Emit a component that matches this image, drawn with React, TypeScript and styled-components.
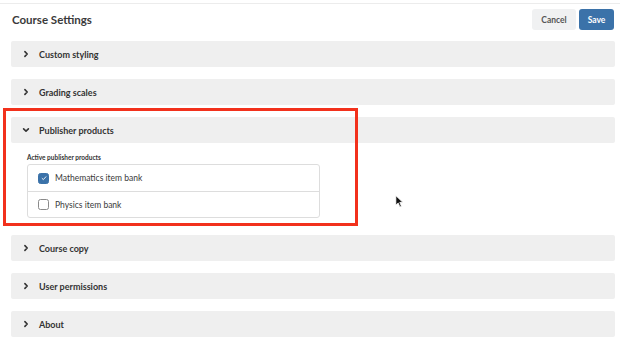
import React from 'react';
import styled, { createGlobalStyle } from 'styled-components';

const GlobalStyle = createGlobalStyle`
    html, body {
        margin: 0;
        padding: 0;
        background: #ffffff;
    }
    body {
        font-family: 'Lato', 'Noto Sans', sans-serif;
        color: #333333;
    }
`;

type Section = { title: string; open?: boolean };

const sections: Section[] = [
    { title: 'Custom styling' },
    { title: 'Grading scales' },
    { title: 'Publisher products', open: true },
    { title: 'Course copy' },
    { title: 'User permissions' },
    { title: 'About' },
];

const products = [
    { name: 'Mathematics item bank', checked: true },
    { name: 'Physics item bank', checked: false },
];

const Chevron = ({ open }: { open?: boolean }) => (
    <ChevronIcon viewBox="0 0 10 10" width="10" height="10">
        {open ? (
            <path d="M2.6 3.9 L5 6.2 L7.4 3.9" />
        ) : (
            <path d="M3.9 2.6 L6.2 5 L3.9 7.4" />
        )}
    </ChevronIcon>
);

const Check = ({ checked }: { checked: boolean }) => (
    <CheckBox $checked={checked}>
        {checked && (
            <svg viewBox="0 0 10 10" width="8" height="8">
                <path d="M2.3 5.2 L4.2 7 L7.7 3.1" fill="none" stroke="#fff" strokeWidth="1.1" />
            </svg>
        )}
    </CheckBox>
);

const App = () => {
    return (
        <Page>
            <GlobalStyle />
            <TopRule />
            <Header>
                <Title>Course Settings</Title>
                <Actions>
                    <CancelButton>Cancel</CancelButton>
                    <SaveButton>Save</SaveButton>
                </Actions>
            </Header>
            <List>
                {sections.map((s) => (
                    <div key={s.title}>
                        <Bar>
                            <Chevron open={s.open} />
                            <BarTitle>{s.title}</BarTitle>
                        </Bar>
                        {s.open && (
                            <Panel>
                                <PanelLabel>Active publisher products</PanelLabel>
                                <ProductBox>
                                    {products.map((p) => (
                                        <ProductRow key={p.name}>
                                            <Check checked={p.checked} />
                                            <span>{p.name}</span>
                                        </ProductRow>
                                    ))}
                                </ProductBox>
                            </Panel>
                        )}
                    </div>
                ))}
            </List>
            <Highlight />
            <Cursor viewBox="0 0 12 18" width="9" height="13">
                <path d="M1 1 L1 14 L4.2 11 L6.6 16.5 L8.6 15.6 L6.3 10.2 L10.5 10.2 Z" fill="#111" stroke="#fff" strokeWidth="1" />
            </Cursor>
        </Page>
    );
};

export default App;

const Page = styled.div`
    position: relative;
    width: 640px;
    height: 364px;
    overflow: hidden;
    padding-top: 3px;
    box-sizing: border-box;
`;

const TopRule = styled.div`
    width: 620px;
    height: 1px;
    background: #ececec;
`;

const Header = styled.div`
    display: flex;
    justify-content: space-between;
    align-items: center;
    height: 21px;
    margin-top: 5px;
    padding: 0 26px 0 12px;
`;

const Title = styled.div`
    font-size: 11.5px;
    font-weight: 700;
    color: #3a3a3a;
`;

const Actions = styled.div`
    display: flex;
    gap: 3px;
    height: 100%;
`;

const ButtonBase = styled.button`
    font-family: 'Lato', sans-serif;
    font-size: 8.5px;
    font-weight: 700;
    border: 0;
    border-radius: 3px;
    height: 21px;
    padding: 0;
    cursor: pointer;
`;

const CancelButton = styled(ButtonBase)`
    width: 44px;
    background: #f0f1f2;
    color: #555555;
`;

const SaveButton = styled(ButtonBase)`
    width: 35px;
    background: #3b72a9;
    color: #ffffff;
`;

const List = styled.div`
    display: flex;
    flex-direction: column;
    gap: 12px;
    margin-top: 11px;
    padding: 0 25px 0 11px;
`;

const Bar = styled.div`
    display: flex;
    align-items: center;
    height: 26px;
    background: #efefef;
    border-radius: 2px;
    padding-left: 10px;
`;

const ChevronIcon = styled.svg`
    flex: none;
    fill: none;
    stroke: #333;
    stroke-width: 1.6;
    stroke-linecap: round;
    stroke-linejoin: round;
`;

const BarTitle = styled.span`
    margin-left: 8px;
    font-size: 9px;
    font-weight: 700;
    color: #333333;
`;

const Panel = styled.div`
    padding: 11px 0 5px 16px;
`;

const PanelLabel = styled.div`
    font-size: 6.5px;
    font-weight: 700;
    color: #333333;
    line-height: 8px;
    margin-bottom: 2px;
`;

const ProductBox = styled.div`
    width: 293px;
    border: 1px solid #dddddd;
    border-radius: 3px;
    box-sizing: border-box;
`;

const ProductRow = styled.div`
    display: flex;
    align-items: center;
    height: 26px;
    box-sizing: border-box;
    padding-left: 10px;
    font-size: 8.5px;
    color: #3a3a3a;
    & + & {
        border-top: 1px solid #dddddd;
    }
`;

const CheckBox = styled.span<{ $checked: boolean }>`
    display: flex;
    align-items: center;
    justify-content: center;
    width: 11px;
    height: 11px;
    box-sizing: border-box;
    margin-right: 6px;
    border-radius: 2.5px;
    background: ${(p) => (p.$checked ? '#3b72a9' : '#ffffff')};
    border: 1px solid ${(p) => (p.$checked ? '#3b72a9' : '#8a8a8a')};
`;

const Highlight = styled.div`
    position: absolute;
    left: 3px;
    top: 108px;
    width: 355px;
    height: 118px;
    box-sizing: border-box;
    border: 3px solid #f2311c;
    pointer-events: none;
`;

const Cursor = styled.svg`
    position: absolute;
    left: 395px;
    top: 195px;
`;
